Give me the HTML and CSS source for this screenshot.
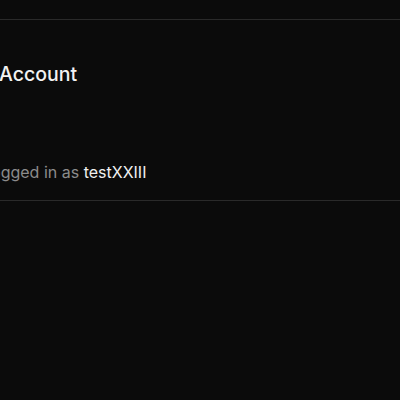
FILE: index.html
```html
<!DOCTYPE html>
<html lang="en">
<head>
<meta charset="utf-8">
<link rel="stylesheet" href="styles.css">
</head>
<body>
<div class="top-gap"></div>
<section class="account">
  <h2 class="account-title">Account</h2>
  <p class="account-status">Logged in as <span class="account-user">testXXIII</span></p>
</section>
</body>
</html>
```
FILE: styles.css
```css
html, body {
  margin: 0;
  padding: 0;
  background: #0b0b0b;
  height: 100%;
  overflow: hidden;
}
body {
  font-family: Inter, "Noto Sans", sans-serif;
  color: #f2f2f2;
}
.top-gap {
  height: 19px;
}
.account {
  border-top: 1px solid #2a2a2a;
  border-bottom: 1px solid #2a2a2a;
  padding: 42px 0 0;
  height: 182px;
  box-sizing: border-box;
}
.account-title {
  margin: 0 0 0 -1px;
  font-size: 19.5px;
  font-weight: 500;
  line-height: 24px;
}
.account-status {
  margin: 76px 0 0 -18px;
  font-size: 16px;
  line-height: 20px;
  color: #8c8c8c;
}
.account-user {
  color: #f0f0f0;
}
```
